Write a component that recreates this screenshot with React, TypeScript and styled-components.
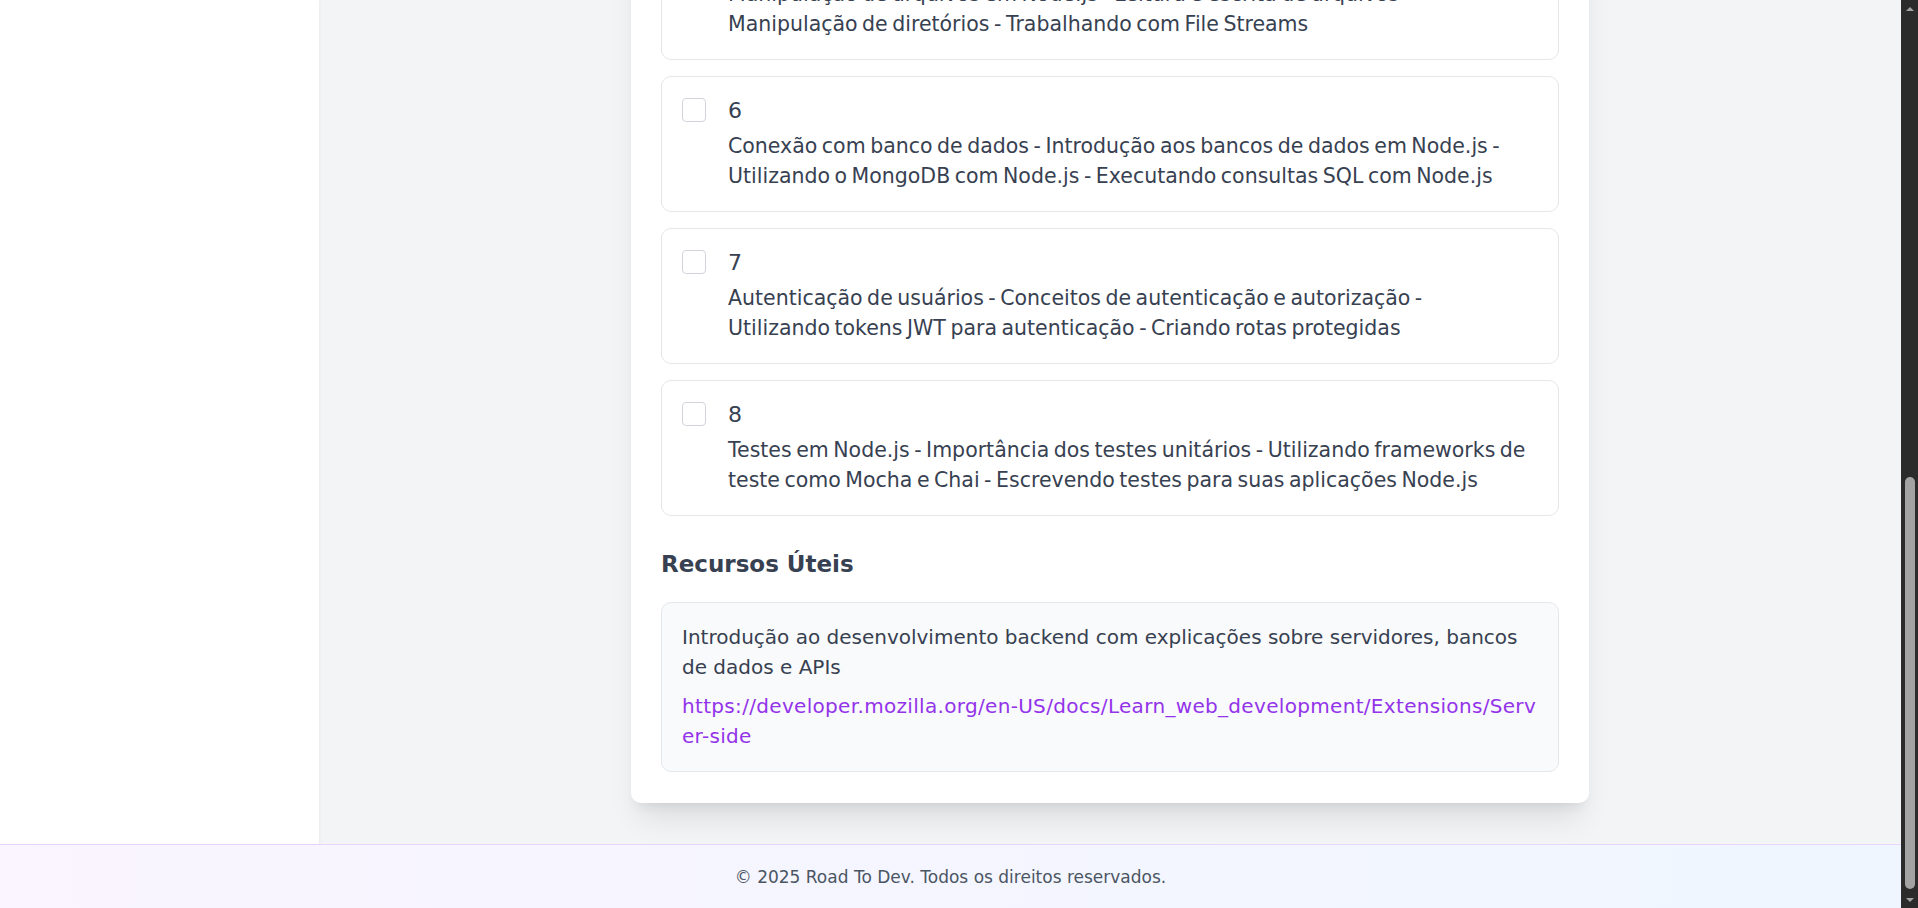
import React, { useState } from 'react';
import styled, { createGlobalStyle } from 'styled-components';

interface Topic {
    id: number;
    text: string;
}

const topics: Topic[] = [
    {
        id: 5,
        text: 'Manipulação de arquivos em Node.js - Leitura e escrita de arquivos - Manipulação de diretórios - Trabalhando com File Streams',
    },
    {
        id: 6,
        text: 'Conexão com banco de dados - Introdução aos bancos de dados em Node.js - Utilizando o MongoDB com Node.js - Executando consultas SQL com Node.js',
    },
    {
        id: 7,
        text: 'Autenticação de usuários - Conceitos de autenticação e autorização - Utilizando tokens JWT para autenticação - Criando rotas protegidas',
    },
    {
        id: 8,
        text: 'Testes em Node.js - Importância dos testes unitários - Utilizando frameworks de teste como Mocha e Chai - Escrevendo testes para suas aplicações Node.js',
    },
];

const resource = {
    description: 'Introdução ao desenvolvimento backend com explicações sobre servidores, bancos de dados e APIs',
    url: 'https://developer.mozilla.org/en-US/docs/Learn_web_development/Extensions/Server-side',
};

export default function App() {
    const [done, setDone] = useState<Record<number, boolean>>({});

    const toggle = (id: number) => {
        setDone((prev) => ({ ...prev, [id]: !prev[id] }));
    };

    return (
        <>
            <GlobalStyle />
            <Viewport>
                <Page>
                    <Body>
                        <Sidebar />
                        <Main>
                            <Card>
                                <TopicList>
                                    {topics.map((topic) => (
                                        <TopicItem key={topic.id}>
                                            <Check
                                                type="checkbox"
                                                checked={!!done[topic.id]}
                                                onChange={() => toggle(topic.id)}
                                            />
                                            <TopicBody>
                                                <TopicNumber>{topic.id}</TopicNumber>
                                                <TopicText>{topic.text}</TopicText>
                                            </TopicBody>
                                        </TopicItem>
                                    ))}
                                </TopicList>

                                <SectionTitle>Recursos Úteis</SectionTitle>
                                <ResourceBox>
                                    <ResourceText>{resource.description}</ResourceText>
                                    <ResourceLink href={resource.url}>
                                        {resource.url}
                                    </ResourceLink>
                                </ResourceBox>
                            </Card>
                        </Main>
                    </Body>
                    <Footer>© 2025 Road To Dev. Todos os direitos reservados.</Footer>
                </Page>
                <ScrollTrack>
                    <ScrollArrow $dir="up" />
                    <ScrollSpace>
                        <ScrollThumb />
                    </ScrollSpace>
                    <ScrollArrow $dir="down" />
                </ScrollTrack>
            </Viewport>
        </>
    );
}

// Styled Components
const GlobalStyle = createGlobalStyle`
    html, body {
        margin: 0;
        padding: 0;
        height: 100%;
        overflow: hidden;
    }
    body {
        font-family: "DejaVu Sans", "Noto Sans", sans-serif;
        color: #374151;
    }
    * {
        box-sizing: border-box;
    }
`;

const Viewport = styled.div`
    display: flex;
    height: 100vh;
`;

const Page = styled.div`
    flex: 1;
    min-width: 0;
    display: flex;
    flex-direction: column;
`;

const Body = styled.div`
    flex: 1;
    min-height: 0;
    display: flex;
`;

const Sidebar = styled.aside`
    width: 319px;
    flex-shrink: 0;
    background: #ffffff;
    box-shadow: 1px 0 3px rgba(0, 0, 0, 0.04);
    position: relative;
    z-index: 1;
`;

const Main = styled.main`
    flex: 1;
    min-width: 0;
    background: #f3f4f6;
    display: flex;
    flex-direction: column;
    justify-content: flex-end;
    overflow: hidden;
    padding: 0 30px 41px;
`;

const Card = styled.section`
    flex-shrink: 0;
    width: 100%;
    max-width: 958px;
    margin: 0 auto;
    background: #ffffff;
    border-radius: 10px;
    padding: 30px 30px 31px;
    box-shadow: 0 22px 30px -8px rgba(0, 0, 0, 0.1), 0 8px 12px -6px rgba(0, 0, 0, 0.08);
`;

const TopicList = styled.div`
    display: flex;
    flex-direction: column;
    gap: 16px;
`;

const TopicItem = styled.label`
    display: flex;
    align-items: flex-start;
    gap: 22px;
    padding: 20px;
    border: 1px solid #e5e7eb;
    border-radius: 10px;
    background: #ffffff;
    cursor: pointer;
`;

const Check = styled.input`
    appearance: none;
    flex-shrink: 0;
    width: 24px;
    height: 24px;
    margin: 1px 0 0 0;
    border: 1px solid #d1d5db;
    border-radius: 4px;
    background: #ffffff;
    cursor: pointer;

    &:checked {
        background: #9333ea;
        border-color: #9333ea;
    }
`;

const TopicBody = styled.div`
    flex: 1;
    min-width: 0;
`;

const TopicNumber = styled.div`
    font-size: 22px;
    line-height: 28px;
    margin-bottom: 6px;
    color: #374151;
`;

const TopicText = styled.p`
    margin: 0;
    padding-right: 12px;
    font-size: 20.5px;
    word-spacing: -2px;
    line-height: 30px;
    color: #374151;
`;

const SectionTitle = styled.h3`
    margin: 31px 0 20px;
    font-size: 23px;
    line-height: 35px;
    font-weight: 700;
    color: #374151;
`;

const ResourceBox = styled.div`
    padding: 20px;
    background: #f9fafb;
    border: 1px solid #e5e7eb;
    border-radius: 10px;
`;

const ResourceText = styled.p`
    margin: 0;
    font-size: 20px;
    line-height: 29.5px;
    color: #374151;
`;

const ResourceLink = styled.a`
    display: block;
    margin-top: 10px;
    font-size: 20px;
    line-height: 29.5px;
    letter-spacing: 0.32px;
    color: #9333ea;
    text-decoration: none;
    word-break: break-all;
`;

const Footer = styled.footer`
    flex-shrink: 0;
    height: 64px;
    display: flex;
    align-items: center;
    justify-content: center;
    border-top: 1px solid #e9d5ff;
    background: linear-gradient(to right, #faf5ff, #eff6ff);
    font-size: 17px;
    color: #4b5563;
`;

const ScrollTrack = styled.div`
    width: 17px;
    flex-shrink: 0;
    background: #2b2b2b;
    display: flex;
    flex-direction: column;
    align-items: center;
`;

const ScrollSpace = styled.div`
    flex: 1;
    width: 100%;
    display: flex;
    flex-direction: column;
    justify-content: flex-end;
    align-items: center;
    padding-bottom: 2px;
`;

const ScrollThumb = styled.div`
    width: 10px;
    height: 412px;
    border-radius: 5px;
    background: #a3a3a3;
`;

const ScrollArrow = styled.div<{ $dir: 'up' | 'down' }>`
    height: 17px;
    width: 100%;
    display: flex;
    align-items: center;
    justify-content: center;

    &::before {
        content: '';
        width: 0;
        height: 0;
        border-left: 4px solid transparent;
        border-right: 4px solid transparent;
        ${({ $dir }) =>
            $dir === 'up'
                ? 'border-bottom: 4px solid #a3a3a3;'
                : 'border-top: 4px solid #a3a3a3;'}
    }
`;
